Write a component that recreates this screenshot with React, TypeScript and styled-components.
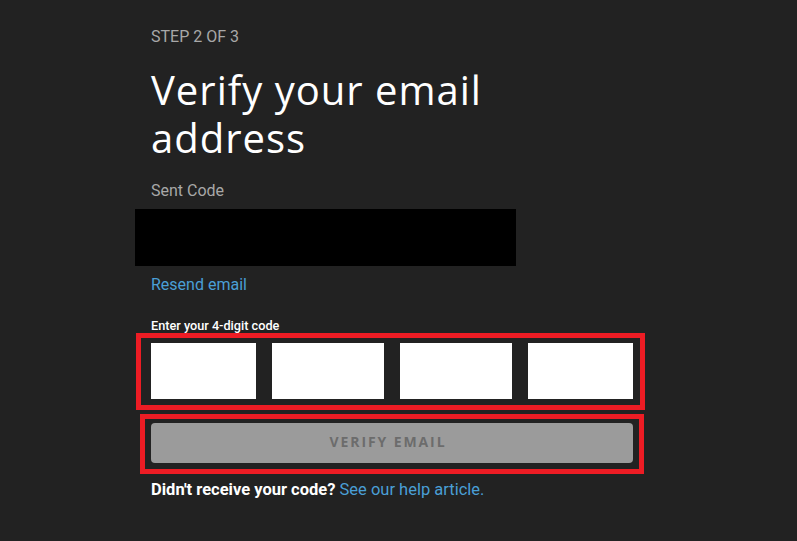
import React from "react";
import styled, { createGlobalStyle } from "styled-components";

const Global = createGlobalStyle`
  html, body {
    margin: 0;
    padding: 0;
    background: #222222;
  }
  body {
    font-family: Roboto, "Liberation Sans", sans-serif;
    color: #ffffff;
  }
`;

const Page = styled.main`
  min-height: 541px;
  background: #222222;
  padding: 29px 0 40px 151px;
  box-sizing: border-box;
`;

const Column = styled.div`
  width: 482px;
  display: flex;
  flex-direction: column;
`;

const Step = styled.div`
  font-size: 16px;
  line-height: 16px;
  color: #a8a8a8;
  text-transform: uppercase;
`;

const Title = styled.h1`
  margin: 21px 0 0;
  font-family: "Open Sans", "Noto Sans", sans-serif;
  font-weight: 400;
  font-size: 40px;
  line-height: 48px;
  letter-spacing: 1px;
  color: #ffffff;
  width: 360px;
`;

const Label = styled.div`
  margin-top: 19px;
  font-size: 16px;
  line-height: 20px;
  color: #a8a8a8;
`;

const Redacted = styled.div`
  margin: 8px 0 0 -16px;
  width: 381px;
  height: 57px;
  background: #000000;
`;

const Link = styled.a`
  color: #4a9fd6;
  text-decoration: none;
  font-weight: 400;
  cursor: pointer;
`;

const ResendLine = styled.div`
  margin-top: 9px;
  font-size: 16px;
  line-height: 20px;
`;

const CodeLabel = styled.label`
  margin-top: 24px;
  font-size: 12.7px;
  line-height: 14px;
  font-weight: 500;
  color: #ffffff;
`;

const Highlight = styled.div<{ $left: number; $right: number; $top: number }>`
  margin: ${(p) => p.$top}px ${(p) => -p.$right}px 0 ${(p) => -p.$left}px;
  border: 5px solid #ed1c24;
  box-sizing: border-box;
`;

const CodeRow = styled.div`
  display: grid;
  grid-template-columns: 105px 112px 112px 105px;
  column-gap: 16px;
  padding: 5px 7px 6px 10px;
`;

const CodeInput = styled.input`
  height: 56px;
  border: none;
  border-radius: 0;
  background: #ffffff;
  padding: 0;
  margin: 0;
  width: 100%;
  box-sizing: border-box;
  font-size: 24px;
  text-align: center;
  outline: none;
`;

const ButtonWrap = styled.div`
  padding: 4px 6px 6px 6px;
`;

const VerifyButton = styled.button`
  display: block;
  width: 100%;
  height: 40px;
  border: none;
  border-radius: 4px;
  background: #9b9b9b;
  color: #6c6c6c;
  padding: 0 8px 3px 0;
  font-family: "Open Sans", "Noto Sans", sans-serif;
  font-weight: 700;
  font-size: 14px;
  letter-spacing: 1.9px;
  text-transform: uppercase;
  cursor: not-allowed;
`;

const Help = styled.p`
  margin: 6px 0 0;
  font-size: 16.5px;
  line-height: 20px;
`;

const Bold = styled.strong`
  font-weight: 700;
  color: #ffffff;
`;

export default function App() {
  return (
    <>
      <Global />
      <Page>
        <Column>
          <Step>Step 2 of 3</Step>
          <Title>Verify your email address</Title>
          <Label>Sent Code</Label>
          <Redacted />
          <ResendLine>
            <Link>Resend email</Link>
          </ResendLine>
          <CodeLabel>Enter your 4-digit code</CodeLabel>
          <Highlight $left={15} $right={12} $top={0}>
            <CodeRow>
              <CodeInput maxLength={1} aria-label="Digit 1" />
              <CodeInput maxLength={1} aria-label="Digit 2" />
              <CodeInput maxLength={1} aria-label="Digit 3" />
              <CodeInput maxLength={1} aria-label="Digit 4" />
            </CodeRow>
          </Highlight>
          <Highlight $left={11} $right={11} $top={4}>
            <ButtonWrap>
              <VerifyButton disabled>Verify Email</VerifyButton>
            </ButtonWrap>
          </Highlight>
          <Help>
            <Bold>Didn't receive your code?</Bold> <Link>See our help article.</Link>
          </Help>
        </Column>
      </Page>
    </>
  );
}
